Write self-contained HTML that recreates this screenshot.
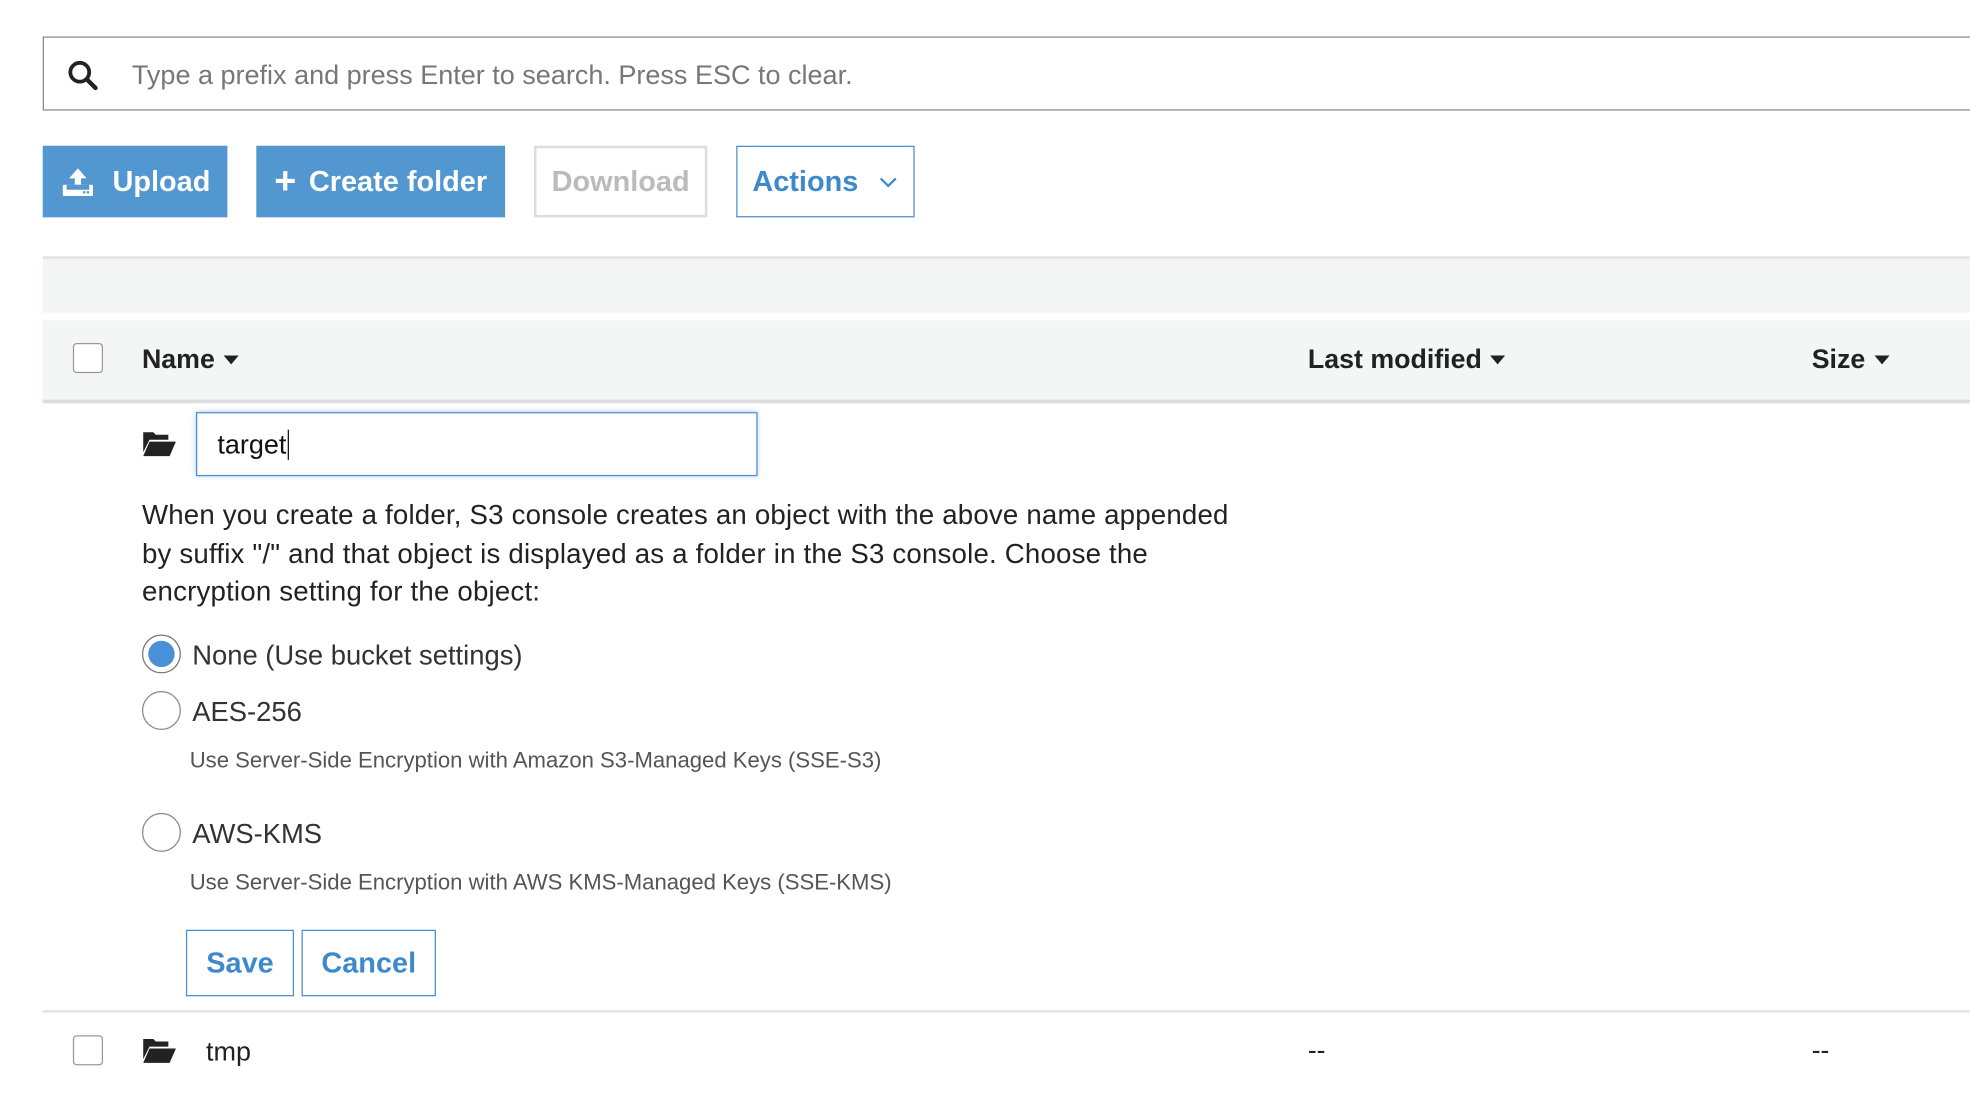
<!DOCTYPE html>
<html><head><meta charset="utf-8"><style>
html,body{margin:0;padding:0;background:#fff;overflow:hidden;width:1970px;height:1108px}
#w{position:absolute;left:0;top:0;width:1568px;height:882px;transform:scale(1.25638);transform-origin:0 0;font-family:"Liberation Sans",Arial,sans-serif;color:#222}
.a{position:absolute}
.btn{position:absolute;top:116px;height:57px;box-sizing:border-box;font-size:23px;font-weight:bold;display:flex;align-items:center;justify-content:center}
.cb{position:absolute;width:24px;height:24px;border:1px solid #999;border-radius:3px;box-sizing:border-box;background:#fff}
.hd{position:absolute;top:274px;font-size:21.3px;font-weight:bold}
.tri{display:inline-block;width:0;height:0;border-left:6px solid transparent;border-right:6px solid transparent;border-top:7px solid #222;margin-left:7px;vertical-align:3px}
.rad{position:absolute;left:113px;width:31px;height:31px;border:1px solid #888;border-radius:50%;box-sizing:border-box;background:#fff}
.lbl{position:absolute;left:153px;font-size:21.8px;color:#333}
.desc{position:absolute;left:151px;font-size:17.6px;color:#555}
</style></head><body><div id="w">
<div class="a" style="left:34px;top:29px;width:1560px;height:59px;border:1px solid #8a8a8a;box-sizing:border-box"></div>
<svg class="a" style="left:53px;top:47px" width="26" height="26" viewBox="0 0 26 26"><circle cx="10.5" cy="10.5" r="7.5" fill="none" stroke="#222" stroke-width="3"/><line x1="16" y1="16" x2="23" y2="23" stroke="#222" stroke-width="3.5" stroke-linecap="round"/></svg>
<div class="a" style="left:105px;top:48px;font-size:21.5px;color:#777">Type a prefix and press Enter to search. Press ESC to clear.</div>
<div class="btn" style="left:34px;width:147px;background:#5297d0;color:#fff"><svg width="28" height="26" viewBox="0 0 28 26" style="margin-right:14px"><path d="M14 2 L7 10 H11.5 V17 H16.5 V10 H21 Z" fill="#fff"/><rect x="2" y="15" width="24" height="9" rx="1" fill="#fff"/><rect x="5" y="15" width="18" height="4" fill="#5297d0"/><circle cx="19" cy="21" r="1" fill="#5297d0"/><circle cx="22" cy="21" r="1" fill="#5297d0"/></svg>Upload</div>
<div class="btn" style="left:204px;width:198px;background:#5297d0;color:#fff"><span style="font-size:30px;margin-right:10px;line-height:1">+</span>Create folder</div>
<div class="btn" style="left:425px;width:138px;border:2px solid #ddd;color:#bbb;font-weight:bold">Download</div>
<div class="btn" style="left:586px;width:142px;border:1.5px solid #4a8fd0;color:#3e89cc">Actions<svg width="16" height="10" viewBox="0 0 16 10" style="margin-left:16px"><path d="M2 2 L8 8 L14 2" fill="none" stroke="#3e89cc" stroke-width="1.8"/></svg></div>
<div class="a" style="left:34px;top:204px;width:1540px;height:43px;background:#f3f4f4;border-top:2px solid #e4e4e4"></div>
<div class="a" style="left:34px;top:255px;width:1540px;height:63px;background:#f4f5f5;border-bottom:3px solid #ddd;box-sizing:content-box"></div>
<div class="cb" style="left:58px;top:273px"></div>
<div class="hd" style="left:113px">Name<span class="tri"></span></div>
<div class="hd" style="left:1041px">Last modified<span class="tri"></span></div>
<div class="hd" style="left:1442px">Size<span class="tri"></span></div>
<svg class="a" style="left:113px;top:342px" width="28" height="22" viewBox="0 0 28 22"><path d="M1 2 H9 L11 4 H21 V8 H6 L1 18 Z" fill="#222"/><path d="M6 9.5 H27 L22 21 H1 Z" fill="#222"/></svg>
<div class="a" style="left:156px;top:328px;width:447px;height:51px;border:1.5px solid #4a8fd8;box-sizing:border-box;box-shadow:0 0 4px rgba(74,143,216,.5)"></div>
<div class="a" style="left:173px;top:342px;font-size:21.5px;color:#111">target<span style="border-left:1.5px solid #111;margin-left:1px"></span></div>
<div class="a" style="left:113px;top:395px;width:950px;font-size:22px;letter-spacing:0.15px;line-height:30.5px;color:#222">When you create a folder, S3 console creates an object with the above name appended<br>by suffix "/" and that object is displayed as a folder in the S3 console. Choose the<br>encryption setting for the object:</div>
<div class="rad" style="top:505px;border-color:#777"><div style="position:absolute;left:4px;top:4px;width:21px;height:21px;border-radius:50%;background:#4a90d8"></div></div>
<div class="lbl" style="top:509px">None (Use bucket settings)</div>
<div class="rad" style="top:550px"></div>
<div class="lbl" style="top:554px">AES-256</div>
<div class="desc" style="top:595px">Use Server-Side Encryption with Amazon S3-Managed Keys (SSE-S3)</div>
<div class="rad" style="top:647px"></div>
<div class="lbl" style="top:651px">AWS-KMS</div>
<div class="desc" style="top:692px">Use Server-Side Encryption with AWS KMS-Managed Keys (SSE-KMS)</div>
<div class="btn" style="left:148px;top:740px;width:86px;height:53px;border:1.5px solid #4a8fd0;color:#3e89cc">Save</div>
<div class="btn" style="left:240px;top:740px;width:107px;height:53px;border:1.5px solid #4a8fd0;color:#3e89cc">Cancel</div>
<div class="a" style="left:34px;top:804px;width:1540px;height:2px;background:#e4e4e4"></div>
<div class="cb" style="left:58px;top:824px"></div>
<svg class="a" style="left:113px;top:825px" width="28" height="22" viewBox="0 0 28 22"><path d="M1 2 H9 L11 4 H21 V8 H6 L1 18 Z" fill="#222"/><path d="M6 9.5 H27 L22 21 H1 Z" fill="#222"/></svg>
<div class="a" style="left:164px;top:825px;font-size:21.5px">tmp</div>
<div class="a" style="left:1041px;top:825px;font-size:21px">--</div>
<div class="a" style="left:1442px;top:825px;font-size:21px">--</div>
</div></body></html>
